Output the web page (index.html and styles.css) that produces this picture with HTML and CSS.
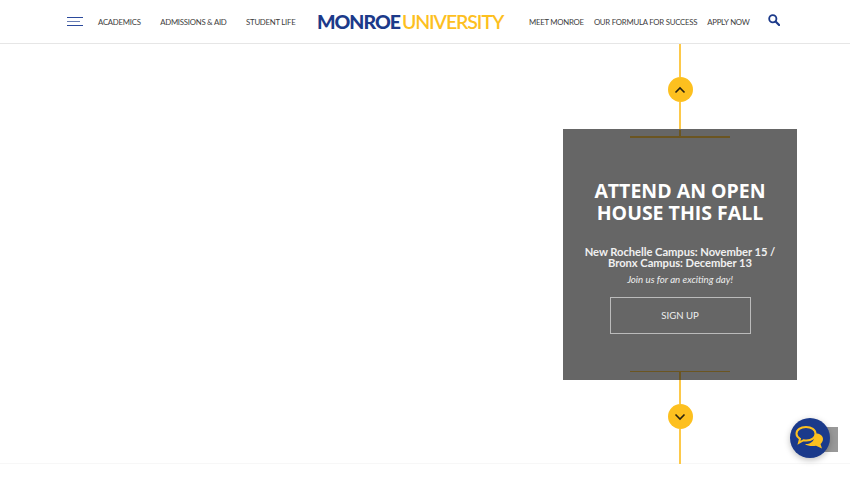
FILE: index.html
```html
<!DOCTYPE html>
<html lang="en">
<head>
<meta charset="utf-8">
<title>Monroe University</title>
<link rel="stylesheet" href="styles.css">
</head>
<body>
<header class="site-header">
  <button class="menu-toggle" aria-label="Menu"><span></span><span></span><span></span></button>
  <nav class="nav nav-left">
    <a href="#">ACADEMICS</a>
    <a href="#">ADMISSIONS &amp; AID</a>
    <a href="#">STUDENT LIFE</a>
  </nav>
  <a class="logo" href="#"><span class="logo-a">MONROE</span><span class="logo-b">UNIVERSITY</span></a>
  <nav class="nav nav-right">
    <a href="#">MEET MONROE</a>
    <a href="#">OUR FORMULA FOR SUCCESS</a>
    <a href="#">APPLY NOW</a>
  </nav>
  <button class="search" aria-label="Search">
    <svg width="12" height="12" viewBox="0 0 13 13"><circle cx="5.2" cy="5.2" r="3.9" fill="none" stroke="#1c3a8a" stroke-width="2"/><path d="M8.2 8.2 L12 12" stroke="#1c3a8a" stroke-width="2.4" stroke-linecap="round"/></svg>
  </button>
</header>
<main class="stage">
  <section class="timeline">
    <div class="stem stem-top"></div>
    <button class="round" aria-label="Previous">
      <svg width="12" height="8" viewBox="0 0 12 8"><path d="M1.5 6.5 L6 2 L10.500 6.500" fill="none" stroke="#2b2410" stroke-width="1.600"/></svg>
    </button>
    <div class="stem stem-mid"></div>
    <article class="card">
      <span class="rule rule-top"></span>
      <h2 class="card-title">ATTEND AN OPEN HOUSE THIS FALL</h2>
      <p class="card-sub">New Rochelle Campus: November 15 / Bronx Campus: December 13</p>
      <p class="card-note">Join us for an exciting day!</p>
      <a class="card-btn" href="#">SIGN UP</a>
      <span class="rule rule-bottom"></span>
    </article>
    <div class="stem stem-low"></div>
    <button class="round" aria-label="Next">
      <svg width="12" height="8" viewBox="0 0 12 8"><path d="M1.5 1.500 L6 6 L10.500 1.500" fill="none" stroke="#2b2410" stroke-width="1.600"/></svg>
    </button>
    <div class="stem stem-end"></div>
  </section>
</main>
<div class="to-top"></div>
<button class="chat" aria-label="Chat">
  <svg width="30" height="26" viewBox="0 0 30 26">
    <path d="M19 8.500 C24 8 28 10 28 14 C28 16.500 26.500 18 25.500 19 L27 23.500 L21 20.800 C17 21.500 12 21 10 19 C15 19.500 21 16 19 8.500 Z" fill="#fdc01f"/>
    <path d="M11 2 C16.500 2 20.500 4.800 20.500 8.800 C20.500 12.800 16.500 15.500 11.500 15.500 C10.500 15.500 9.500 15.400 8.500 15.200 L4 17.800 L5 13.800 C2.800 12.500 1.500 10.800 1.500 8.800 C1.500 4.800 5.500 2 11 2 Z" fill="#1b3a8b" stroke="#fdc01f" stroke-width="2"/>
  </svg>
</button>
</body>
</html>
```
FILE: styles.css
```css
* { box-sizing: border-box; }
html, body { margin: 0; padding: 0; }
body {
  width: 850px;
  height: 478px;
  overflow: hidden;
  background: #fff;
  font-family: "Lato", "Liberation Sans", sans-serif;
}
button { border: 0; padding: 0; background: none; }
a { text-decoration: none; color: inherit; }

.site-header {
  height: 44px;
  display: flex;
  align-items: center;
  padding-left: 67px;
  border-bottom: 1px solid #e6e6e6;
  background: #fff;
}
.menu-toggle {
  width: 16px;
  display: flex;
  flex-direction: column;
  gap: 3px;
  margin-right: 15px;
}
.menu-toggle span { display: block; height: 1px; background: #2b4a9c; }
.menu-toggle span:nth-child(2) { width: 13px; background: #6a7fb5; }
.nav {
  display: flex;
  font-size: 7.800px;
  color: #3d3d3d;
  white-space: nowrap;
  letter-spacing: -0.250px;
  padding-top: 1px;
}
.nav-left { gap: 19.500px; width: 219px; }
.nav-right { gap: 10px; width: 239px; }
.logo {
  width: 212px;
  display: flex;
  gap: 2px;
  font-size: 19.500px;
  line-height: 1;
  white-space: nowrap;
}
.logo-a { font-weight: 900; color: #1c3a8a; letter-spacing: -1px; }
.logo-b { font-weight: 600; color: #fdc01f; letter-spacing: -1.100px; }
.search { display: flex; margin-top: -4px; }

.stage {
  height: 420px;
  display: flex;
  justify-content: flex-end;
  padding-right: 53px;
  border-bottom: 1px solid #f7f7f7;
}
.timeline {
  width: 234px;
  display: flex;
  flex-direction: column;
  align-items: center;
}
.stem { width: 2px; flex: none; background: #fdc94a; }
.stem-top { height: 33px; }
.stem-mid { height: 27px; }
.stem-low { height: 24px; }
.stem-end { height: 35px; }
.round {
  width: 25px;
  height: 25px;
  flex: none;
  border-radius: 50%;
  background: #fdc01f;
  display: flex;
  align-items: center;
  justify-content: center;
}
.card {
  position: relative;
  flex: none;
  width: 234px;
  height: 251px;
  padding-top: 51px;
  display: flex;
  flex-direction: column;
  align-items: center;
  background: #666;
  color: #fff;
  text-align: center;
}
.rule {
  position: absolute;
  left: 67px;
  width: 100px;
  background: #6b5521;
}
.rule::before {
  content: "";
  position: absolute;
  left: 49px;
  width: 2px;
  height: 8px;
  background: #6b5521;
}
.rule-top { top: 7px; height: 2px; }
.rule-top::before { bottom: 0; }
.rule-bottom { bottom: 8px; height: 1px; }
.rule-bottom::before { top: 0; height: 9px; }
.card-title {
  margin: 0;
  width: 200px;
  font-family: "Open Sans", "Liberation Sans", sans-serif;
  font-size: 19.500px;
  line-height: 21.500px;
  font-weight: 700;
}
.card-sub {
  margin: 23px 0 0;
  width: 200px;
  font-size: 11.200px;
  line-height: 11px;
  font-weight: 700;
  color: #f0f0f0;
  letter-spacing: -0.050px;
}
.card-note {
  margin: 4px 0 0;
  font-size: 9.700px;
  line-height: 14px;
  font-style: italic;
  color: #eee;
}
.card-btn {
  margin-top: 11px;
  width: 141px;
  height: 37px;
  display: flex;
  align-items: center;
  justify-content: center;
  border: 1px solid #bbb;
  font-size: 9.600px;
  color: #eee;
}
.to-top {
  position: absolute;
  left: 813px;
  top: 427px;
  width: 25px;
  height: 25px;
  background: #999;
}
.chat {
  position: absolute;
  left: 790px;
  top: 418px;
  width: 40px;
  height: 40px;
  border-radius: 50%;
  background: #1b3a8b;
  box-shadow: 0 2px 6px rgba(0,0,0,.25);
  display: flex;
  align-items: center;
  justify-content: center;
}
```
